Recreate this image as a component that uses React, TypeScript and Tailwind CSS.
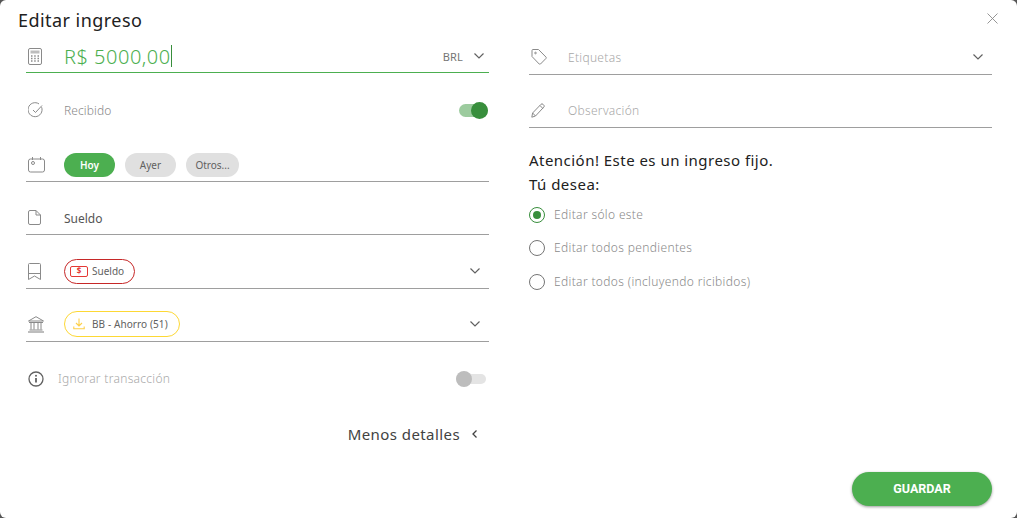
import React from 'react';

const font = { fontFamily: '"Noto Sans", "Open Sans", sans-serif' };

const Chevron = ({ className = '' }: { className?: string }) => (
  <svg width="12" height="8" viewBox="0 0 12 8" fill="none" stroke="#616161" strokeWidth="1.2" className={className}>
    <path d="M1.5 1.5 6 6l4.5-4.5" />
  </svg>
);

const CalcIcon = () => (
  <svg width="14" height="17" viewBox="0 0 14 17" fill="none" stroke="#8a8a8a">
    <rect x="0.5" y="0.5" width="13" height="16" rx="1.5" />
    <rect x="2.5" y="2.5" width="9" height="3" fill="#bdbdbd" stroke="none" />
    <path
      d="M3 8h1.5M6.2 8h1.5M9.5 8H11M3 10.5h1.5M6.2 10.5h1.5M9.5 10.5H11M3 13h1.5M6.2 13h1.5M9.5 13H11"
      strokeWidth="1.5"
    />
  </svg>
);

const CheckIcon = () => (
  <svg width="16" height="16" viewBox="0 0 16 16" fill="none" stroke="#8a8a8a" strokeWidth="1">
    <path d="M13.6 5.2A7 7 0 1 1 11 1.9" />
    <path d="M5 8l2.5 2.5L14 3.5" />
  </svg>
);

const CalendarIcon = () => (
  <svg width="18" height="16" viewBox="0 0 18 16" fill="none" stroke="#8a8a8a" strokeWidth="1">
    <rect x="0.5" y="2" width="16" height="13" rx="2" />
    <path d="M4.5 0v3M12.5 0v3" />
    <circle cx="5" cy="6" r="1.5" />
  </svg>
);

const FileIcon = () => (
  <svg width="13" height="15" viewBox="0 0 13 15" fill="none" stroke="#8a8a8a" strokeWidth="1">
    <path d="M2 .5h6l4.5 4.5v8a1.5 1.5 0 0 1-1.5 1.5H2A1.5 1.5 0 0 1 .5 13V2A1.5 1.5 0 0 1 2 .5zM8 .5V5h4.5" />
  </svg>
);

const BookmarkIcon = () => (
  <svg width="13" height="17" viewBox="0 0 13 17" fill="none" stroke="#8a8a8a" strokeWidth="1">
    <path d="M.5 1.5a1 1 0 0 1 1-1h10a1 1 0 0 1 1 1v15l-6-3.5-6 3.5zM.5 10.5h12" />
  </svg>
);

const BankIcon = () => (
  <svg width="16" height="17" viewBox="0 0 16 17" fill="none" stroke="#8a8a8a" strokeWidth="1">
    <path d="M8 .7 15.5 5H.5z" />
    <path d="M1 6.5h14M3 7v6.5M6 7v6.5M10 7v6.5M13 7v6.5M1.5 14h13" />
    <rect x="0" y="15" width="16" height="2" fill="#bdbdbd" stroke="none" />
  </svg>
);

const InfoIcon = () => (
  <svg width="16" height="16" viewBox="0 0 16 16" fill="none" stroke="#616161" strokeWidth="1.3">
    <circle cx="8" cy="8" r="7" />
    <path d="M8 7v4.5" strokeWidth="1.8" />
    <circle cx="8" cy="4.7" r="1" fill="#616161" stroke="none" />
  </svg>
);

const TagIcon = () => (
  <svg width="16" height="16" viewBox="0 0 16 16" fill="none" stroke="#8a8a8a" strokeWidth="1">
    <path d="M1 1.5a1 1 0 0 1 1-1h5.5l7.5 7.6a1 1 0 0 1 0 1.3L9.5 15a1 1 0 0 1-1.3 0L1 7.5z" />
    <circle cx="4.5" cy="4" r="0.8" />
  </svg>
);

const PencilIcon = () => (
  <svg width="14" height="15" viewBox="0 0 14 15" fill="none" stroke="#8a8a8a" strokeWidth="1">
    <path d="M.8 14.2 1.6 10 10 1.3a1.4 1.4 0 0 1 2 0l.8.8a1.4 1.4 0 0 1 0 2L4.5 13zM1.6 10l2.9 3M9 2.5l2.8 2.9" />
  </svg>
);

const Toggle = ({ on }: { on: boolean }) =>
  on ? (
    <div className="flex h-4 w-[30px] items-center justify-end">
      <div className="flex h-[13px] w-[29px] justify-end rounded-full bg-[#9ccb9e]">
        <div className="-my-[2px] h-[17px] w-[17px] shrink-0 rounded-full bg-[#388e3c]" />
      </div>
    </div>
  ) : (
    <div className="flex h-4 w-[30px] items-center">
      <div className="h-[10px] w-[30px] rounded-full bg-[#e4e4e4]">
        <div className="-my-[3px] h-4 w-4 rounded-full bg-[#bdbdbd]" />
      </div>
    </div>
  );

const Pill = ({ label, width, active }: { label: string; width: string; active?: boolean }) => (
  <div
    className={
      active
        ? `flex h-6 items-center justify-center rounded-full bg-[#4caf50] text-[10px] font-semibold text-white ${width}`
        : `flex h-6 items-center justify-center rounded-full bg-[#e0e0e0] text-[10px] text-[#616161] ${width}`
    }
  >
    {label}
  </div>
);

const Radio = ({ label, checked }: { label: string; checked?: boolean }) => (
  <div className="flex h-[17px] items-center gap-[9px]">
    <div
      className={
        checked
          ? 'flex h-4 w-4 items-center justify-center rounded-full border-[1.5px] border-[#388e3c]'
          : 'h-4 w-4 rounded-full border-[1.5px] border-[#757575]'
      }
    >
      {checked && <div className="h-2 w-2 rounded-full bg-[#388e3c]" />}
    </div>
    <span className="text-[12px] font-light tracking-[0.35px] text-[#8a8a8a]">{label}</span>
  </div>
);

const IconCell = ({ children }: { children: React.ReactNode }) => (
  <div className="flex w-[38px] shrink-0 items-center pl-[2px]">{children}</div>
);

export default function App() {
  return (
    <div className="h-[518px] w-[1017px] overflow-hidden bg-[#555555]" style={font}>
      <div className="relative flex h-full flex-col rounded-[6px] bg-white pl-[26px] pr-[25px]">
        <button className="absolute right-[19px] top-[13px]">
          <svg width="11" height="11" viewBox="0 0 11 11" stroke="#8a8a8a" strokeWidth="0.9">
            <path d="M.5.5l10 10M10.5.5l-10 10" />
          </svg>
        </button>

        <h1 className="-ml-2 mt-[7px] h-[26px] text-[18px] leading-[26px] tracking-[0.45px] text-[#212121]">
          Editar ingreso
        </h1>

        <div className="mt-[7px] grid flex-1 grid-cols-2 gap-x-10">
          <div className="flex flex-col">
            <div className="flex h-[33px] items-center border-b border-[#4caf50]">
              <IconCell>
                <CalcIcon />
              </IconCell>
              <span className="mt-[2px] text-[20px] font-light leading-[24px] tracking-[0.5px] text-[#4caf50]">
                R$ 5000,00
              </span>
              <div className="h-[22px] w-px bg-[#388e3c]" />
              <div className="ml-auto flex items-center gap-[10px] pr-[4px]">
                <span className="mt-[2px] text-[11px] tracking-[0.2px] text-[#757575]">BRL</span>
                <Chevron />
              </div>
            </div>

            <div className="mt-[25px] flex h-6 items-center justify-between">
              <div className="flex items-center">
                <IconCell>
                  <CheckIcon />
                </IconCell>
                <span className="mt-[2px] text-[12px] font-light tracking-[0.1px] text-[#8a8a8a]">Recibido</span>
              </div>
              <div className="pr-[1px]">
                <Toggle on />
              </div>
            </div>

            <div className="mt-[27px] flex h-[33px] items-center border-b border-[#9e9e9e]">
              <IconCell>
                <CalendarIcon />
              </IconCell>
              <div className="flex gap-[10px]">
                <Pill label="Hoy" width="w-[51px]" active />
                <Pill label="Ayer" width="w-[51px]" />
                <Pill label="Otros..." width="w-[53px]" />
              </div>
            </div>

            <div className="mt-[18px] flex h-[35px] items-center border-b border-[#9e9e9e]">
              <IconCell>
                <FileIcon />
              </IconCell>
              <span className="mt-[4px] text-[12px] text-[#555555]">Sueldo</span>
            </div>

            <div className="mt-[19px] flex h-[35px] items-center justify-between border-b border-[#9e9e9e] pr-2">
              <div className="flex items-center">
                <IconCell>
                  <BookmarkIcon />
                </IconCell>
                <div className="flex h-[25px] w-[71px] items-center gap-[4px] rounded-full border border-[#c62828] pl-[5px]">
                  <div className="flex h-[11px] w-[18px] items-center justify-center rounded-[2px] border border-[#e53935] text-[8px] font-bold text-[#e53935]">
                    $
                  </div>
                  <span className="text-[10px] text-[#616161]">Sueldo</span>
                </div>
              </div>
              <Chevron />
            </div>

            <div className="mt-[18px] flex h-[35px] items-center justify-between border-b border-[#9e9e9e] pr-2">
              <div className="flex items-center">
                <IconCell>
                  <BankIcon />
                </IconCell>
                <div className="flex h-[26px] w-[116px] items-center gap-[7px] rounded-full border border-[#fdd835] pl-[8px]">
                  <svg width="12" height="12" viewBox="0 0 12 12" fill="none" stroke="#fdd04a" strokeWidth="1.1">
                    <path d="M6 .5v7M3 5l3 3 3-3M.8 8.5v2.2h10.4V8.5" />
                  </svg>
                  <span className="text-[10px] tracking-[0.1px] text-[#616161]">BB - Ahorro (51)</span>
                </div>
              </div>
              <Chevron />
            </div>

            <div className="mt-[25px] flex h-6 items-center justify-between pr-[3px]">
              <div className="flex items-center">
                <div className="flex w-[32px] pl-[2px]">
                  <InfoIcon />
                </div>
                <span className="text-[12px] font-light tracking-[0.3px] text-[#a8a8a8]">Ignorar transacción</span>
              </div>
              <Toggle on={false} />
            </div>

            <div className="mt-[33px] flex items-center justify-end gap-[11px] pr-[11px]">
              <span className="text-[15px] leading-5 tracking-[0.42px] text-[#424242]">Menos detalles</span>
              <svg width="7" height="10" viewBox="0 0 7 10" fill="none" stroke="#424242" strokeWidth="1.3">
                <path d="M5.5 1.5 2 5l3.5 3.5" />
              </svg>
            </div>
          </div>

          <div className="flex flex-col">
            <div className="flex h-[35px] items-center justify-between border-b border-[#9e9e9e] pr-[8px]">
              <div className="flex items-center">
                <IconCell>
                  <TagIcon />
                </IconCell>
                <span className="ml-px mt-[2px] text-[12px] font-light tracking-[0.3px] text-[#a8a8a8]">Etiquetas</span>
              </div>
              <Chevron />
            </div>

            <div className="mt-[18px] flex h-[35px] items-center border-b border-[#9e9e9e]">
              <IconCell>
                <PencilIcon />
              </IconCell>
              <span className="ml-px mt-[2px] text-[12px] font-light tracking-[0.3px] text-[#a8a8a8]">Observación</span>
            </div>

            <p className="mt-[22px] text-[15px] leading-5 tracking-[0.47px] text-[#212121]">
              Atención! Este es un ingreso fijo.
            </p>
            <p className="mt-[4px] text-[15px] leading-5 tracking-[0.47px] text-[#212121]">Tú desea:</p>

            <div className="mt-[12px] flex flex-col gap-[16.5px]">
              <Radio label="Editar sólo este" checked />
              <Radio label="Editar todos pendientes" />
              <Radio label="Editar todos (incluyendo ricibidos)" />
            </div>

            <div className="mt-auto flex justify-end pb-3">
              <button
                className="flex h-[34px] w-[140px] items-center justify-center rounded-full bg-[#4caf50] text-[12.5px] font-bold text-white shadow-[0_1px_3px_rgba(0,0,0,0.4)]"
                style={{ fontFamily: 'Roboto, sans-serif' }}
              >
                GUARDAR
              </button>
            </div>
          </div>
        </div>
      </div>
    </div>
  );
}
